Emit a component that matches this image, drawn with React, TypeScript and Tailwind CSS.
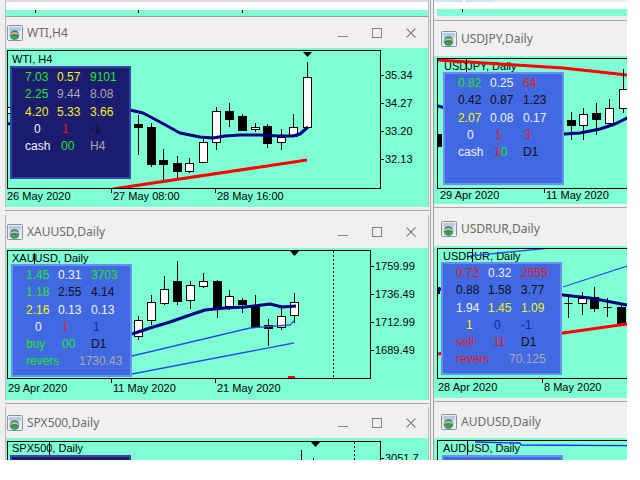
import React from 'react';
import clsx from 'clsx';

type Pt = [number, number];
// x, wick top, wick bottom, body top, body bottom, kind
type Candle = [number, number, number, number, number, 'w' | 'b' | 'x'];
type Cell = { t: React.ReactNode; c: string; cls?: string };

const COLORS: Record<string, string> = {
  g: 'text-[#22e622]',
  y: 'text-[#f4f01a]',
  w: 'text-[#f2f2ff]',
  r: 'text-[#e51b1b]',
  k: 'text-[#101018]',
  s: 'text-[#a9a9b4]',
  b: 'text-[#1226b8]',
};

const pts = (p: Pt[]) => p.map((q) => q.join(',')).join(' ');

const Candles = ({ data }: { data: Candle[] }) => (
  <g>
    {data.map(([x, hi, lo, top, bot, t], i) => (
      <g key={i}>
        <line x1={x + 0.5} y1={hi} x2={x + 0.5} y2={lo} stroke="#000" />
        {t === 'x' ? (
          <line x1={x - 3.5} y1={top + 0.5} x2={x + 4.5} y2={top + 0.5} stroke="#000" />
        ) : (
          <rect
            x={x - 3.5}
            y={top + 0.5}
            width={8}
            height={Math.max(bot - top, 1)}
            fill={t === 'w' ? '#fff' : '#000'}
            stroke="#000"
          />
        )}
      </g>
    ))}
  </g>
);

const Line = ({ p, color, w }: { p: Pt[]; color: string; w: number }) => (
  <polyline points={pts(p)} fill="none" stroke={color} strokeWidth={w} strokeLinejoin="round" />
);

const Wick = ({ x, y1, y2 }: { x: number; y1: number; y2: number }) => (
  <line x1={x + 0.5} y1={y1} x2={x + 0.5} y2={y2} stroke="#000" />
);

const Arrow = ({ x, y }: { x: number; y: number }) => (
  <polygon points={`${x - 4},${y} ${x + 5},${y} ${x + 0.5},${y + 5}`} fill="#000" />
);

const ChartIcon = () => (
  <svg width="16" height="16" viewBox="0 0 16 16" className="shrink-0">
    <rect x="0.5" y="0.5" width="15" height="15" rx="1" fill="#e6edf3" stroke="#8393a5" />
    <rect x="2" y="2" width="12" height="4" fill="#b8cadb" />
    <circle cx="7.5" cy="10" r="4.8" fill="#2b7fc4" />
    <path d="M2.9 9 C5 6.6 10 6.6 12.2 9 L12.3 10.4 C10 8.4 5 8.4 2.8 10.4Z" fill="#f2c51c" />
    <path d="M3.4 12.2 C5.6 10.4 9.4 10.4 11.6 12.2 C9.6 15.4 5.4 15.4 3.4 12.2Z" fill="#3fa535" />
  </svg>
);

const WinButtons = () => (
  <div className="ml-auto flex">
    <div className="w-[34px] flex justify-center">
      <svg width="10" height="10" viewBox="0 0 10 10">
        <line x1="0" y1="8.5" x2="10" y2="8.5" stroke="#858585" />
      </svg>
    </div>
    <div className="w-[34px] flex justify-center">
      <svg width="10" height="10" viewBox="0 0 10 10">
        <rect x="0.5" y="0.5" width="9" height="9" fill="none" stroke="#858585" />
      </svg>
    </div>
    <div className="w-[34px] flex justify-center">
      <svg width="10" height="10" viewBox="0 0 10 10">
        <path d="M0.5 0.5 L9.5 9.5 M9.5 0.5 L0.5 9.5" stroke="#858585" strokeWidth="1.1" />
      </svg>
    </div>
  </div>
);

const TitleBar = ({ title, cls, buttons }: { title: string; cls: string; buttons?: boolean }) => (
  <div className={clsx('flex items-center bg-[#f0f0f0]', cls)}>
    <ChartIcon />
    <span className="ml-[4px] text-[12px] text-[#6b6b6b] whitespace-nowrap font-['Noto_Sans',sans-serif]">
      {title}
    </span>
    {buttons && <WinButtons />}
  </div>
);

const Panel = ({ rows, navy, pos }: { rows: Cell[][]; navy?: boolean; pos: string }) => (
  <div
    className={clsx(
      'absolute w-[121px] h-[113px] border-2 pl-[13px] pt-[1px] text-[12px] leading-[17.3px]',
      navy ? 'bg-[#1b1b6f] border-[#3a44a6]' : 'bg-[#4169e1] border-[#6a8ef4]',
      pos
    )}
  >
    {rows.map((row, i) => (
      <div key={i} className="grid grid-cols-[32px_33px_1fr] whitespace-nowrap">
        {row.map((cell, j) => (
          <span key={j} className={clsx(COLORS[cell.c], cell.cls)}>
            {cell.t}
          </span>
        ))}
      </div>
    ))}
  </div>
);

type ChartProps = {
  area: string;
  plot: string;
  w: number;
  h: number;
  vb: string;
  label: string;
  labelPos: string;
  panel: React.ReactNode;
  children: React.ReactNode;
  prices?: string[];
  pricesPad?: string;
  dates?: { t: string; cls: string }[];
  dateText?: string;
};

const Chart = (props: ChartProps) => (
  <div className={clsx('bg-[#7fffd4] overflow-hidden text-black', props.area)}>
    <div className="flex">
      <div className={clsx('relative shrink-0 border border-black', props.plot)}>
        <span className={clsx('absolute whitespace-nowrap text-[11px] leading-[13px]', props.labelPos)}>
          {props.label}
        </span>
        <svg className="absolute left-0 top-0" width={props.w} height={props.h} viewBox={props.vb}>
          {props.children}
        </svg>
        {props.panel}
      </div>
      {props.prices && (
        <div className={clsx('flex flex-col shrink-0', props.pricesPad)}>
          {props.prices.map((p) => (
            <div key={p} className="h-[28px] flex items-center">
              <span className="w-[3px] h-px bg-black" />
              <span className="ml-[1px] text-[11px] leading-[13px]">{p}</span>
            </div>
          ))}
        </div>
      )}
    </div>
    {props.dates && (
      <div className="flex">
        {props.dates.map((d, i) => (
          <div key={i} className={clsx('flex shrink-0', d.cls)}>
            {i > 0 && <span className="w-px h-[4px] bg-black shrink-0" />}
            <span
              className={clsx('text-[11px] leading-[13px] whitespace-nowrap', i > 0 && 'ml-[1px]', props.dateText)}
            >
              {d.t}
            </span>
          </div>
        ))}
      </div>
    )}
  </div>
);

const Sep = ({ cls }: { cls: string }) => (
  <div className={cls}>
    <div className="h-px bg-[#a9a9a9]" />
  </div>
);

// ---- panel contents ----
const wtiRows: Cell[][] = [
  [{ t: '7.03', c: 'g' }, { t: '0.57', c: 'y' }, { t: '9101', c: 'g' }],
  [{ t: '2.25', c: 'g' }, { t: '9.44', c: 's' }, { t: '8.08', c: 's' }],
  [{ t: '4.20', c: 'y' }, { t: '5.33', c: 'y' }, { t: '3.66', c: 'y' }],
  [{ t: '0', c: 'w', cls: 'ml-[9px]' }, { t: '1', c: 'r', cls: 'ml-[5px]' }, { t: '-1', c: 'k' }],
  [{ t: 'cash', c: 'w' }, { t: '00', c: 'g', cls: 'ml-[4px]' }, { t: 'H4', c: 's' }],
];

const jpyRows: Cell[][] = [
  [{ t: '0.82', c: 'g' }, { t: '0.25', c: 'w' }, { t: '64', c: 'r' }],
  [{ t: '0.42', c: 'k' }, { t: '0.87', c: 'k' }, { t: '1.23', c: 'k' }],
  [{ t: '2.07', c: 'y' }, { t: '0.08', c: 'w' }, { t: '0.17', c: 'w' }],
  [{ t: '0', c: 'w', cls: 'ml-[9px]' }, { t: '1', c: 'r', cls: 'ml-[5px]' }, { t: '3', c: 'r', cls: 'ml-[1px]' }],
  [
    { t: 'cash', c: 'w' },
    {
      t: (
        <>
          <span className="text-[#e51b1b]">1</span>
          <span className="text-[#22e622]">0</span>
        </>
      ),
      c: 'w',
      cls: 'ml-[4px]',
    },
    { t: 'D1', c: 'k' },
  ],
];

const xauRows: Cell[][] = [
  [{ t: '1.45', c: 'g' }, { t: '0.31', c: 'w' }, { t: '3703', c: 'g' }],
  [{ t: '1.18', c: 'g' }, { t: '2.55', c: 'k' }, { t: '4.14', c: 'k' }],
  [{ t: '2.16', c: 'y' }, { t: '0.13', c: 'w' }, { t: '0.13', c: 'w' }],
  [{ t: '0', c: 'w', cls: 'ml-[9px]' }, { t: '1', c: 'r', cls: 'ml-[4px]' }, { t: '1', c: 'b', cls: 'ml-[2px]' }],
  [{ t: 'buy', c: 'g' }, { t: '00', c: 'g', cls: 'ml-[4px]' }, { t: 'D1', c: 'k' }],
  [{ t: 'revers', c: 'g' }, { t: '1730.43', c: 's', cls: 'col-span-2 pl-[21px]' }],
];

const rurRows: Cell[][] = [
  [{ t: '0.72', c: 'r' }, { t: '0.32', c: 'w' }, { t: '2555', c: 'r' }],
  [{ t: '0.88', c: 'k' }, { t: '1.58', c: 'k' }, { t: '3.77', c: 'k' }],
  [{ t: '1.94', c: 'w' }, { t: '1.45', c: 'y' }, { t: '1.09', c: 'y' }],
  [{ t: '1', c: 'y', cls: 'ml-[10px]' }, { t: '0', c: 'b', cls: 'ml-[6px]' }, { t: '-1', c: 'b' }],
  [{ t: 'sell', c: 'r' }, { t: '11', c: 'r', cls: 'ml-[5px]' }, { t: 'D1', c: 'k' }],
  [{ t: 'revers', c: 'r' }, { t: '70.125', c: 's', cls: 'col-span-2 pl-[21px]' }],
];

const emptyRows: Cell[][] = [[{ t: '', c: 'g' }]];

// ---- candle data (page coordinates) ----
const wtiCandles: Candle[] = [
  [6, 105, 115, 107, 113, 'w'],
  [138, 115, 155, 124, 127, 'b'],
  [151, 123, 167, 127, 164, 'b'],
  [163, 149, 183, 160, 164, 'b'],
  [177, 156, 179, 163, 171, 'b'],
  [189, 158, 173, 163, 171, 'w'],
  [203, 137, 163, 142, 162, 'w'],
  [216, 107, 150, 111, 142, 'w'],
  [229, 103, 127, 111, 119, 'b'],
  [242, 114, 131, 116, 130, 'b'],
  [255, 123, 132, 127, 129, 'w'],
  [267, 124, 148, 126, 143, 'b'],
  [281, 129, 150, 137, 142, 'w'],
  [293, 114, 137, 127, 136, 'w'],
  [307, 62, 127, 77, 127, 'w'],
];

const xauCandles: Candle[] = [
  [138, 316, 340, 320, 336, 'w'],
  [151, 295, 325, 302, 320, 'w'],
  [164, 276, 305, 289, 303, 'w'],
  [177, 261, 305, 281, 301, 'b'],
  [190, 281, 309, 285, 300, 'w'],
  [203, 273, 288, 281, 286, 'w'],
  [217, 280, 318, 281, 307, 'b'],
  [229, 290, 310, 296, 306, 'w'],
  [242, 298, 313, 300, 304, 'b'],
  [255, 295, 328, 307, 327, 'b'],
  [268, 319, 346, 325, 328, 'b'],
  [281, 305, 330, 316, 327, 'w'],
  [294, 293, 323, 302, 315, 'w'],
];

const jpyCandles: Candle[] = [
  [437, 128, 150, 134, 146, 'b'],
  [571, 112, 140, 120, 125, 'b'],
  [583, 108, 140, 114, 125, 'w'],
  [596, 103, 135, 113, 119, 'b'],
  [609, 99, 126, 108, 123, 'w'],
  [623, 69, 113, 89, 108, 'w'],
];

const rurCandles: Candle[] = [
  [435, 284, 296, 287, 293, 'b'],
  [568, 297, 318, 303, 303, 'x'],
  [582, 292, 315, 298, 303, 'w'],
  [594, 287, 312, 297, 308, 'b'],
  [607, 298, 317, 307, 307, 'x'],
  [621, 303, 325, 307, 323, 'b'],
];

export default function App() {
  return (
    <div className="w-[640px] h-[480px] bg-white overflow-hidden font-['Liberation_Sans',Arial,sans-serif]">
      <div className="flex w-[627px] h-[460px] bg-[#f0f0f0]">
        {/* left column */}
        <div className="w-[429px] shrink-0 pl-[5px] flex flex-col">
          <div className="h-[17px] flex flex-col border-x border-[#b9b9b9]">
            <div className="h-[2px] bg-[#dcdcdc]" />
            <div className="h-[8px] bg-white" />
            <div className="h-[6px] bg-[#7fffd4] flex items-start">
              <span className="w-[29px] shrink-0" />
              <span className="w-px h-[3px] bg-black" />
              <span className="w-[102px] shrink-0" />
              <span className="w-px h-[3px] bg-black" />
              <span className="w-[103px] shrink-0" />
              <span className="w-px h-[3px] bg-black" />
            </div>
            <div className="h-px bg-[#9c9c9c]" />
          </div>

          <div className="border-x border-[#b9b9b9]">
            <TitleBar title="WTI,H4" cls="h-[31px] pl-[1px]" buttons />
            <Chart
              area="h-[159px] pt-[2px] pl-[1px]"
              plot="w-[374px] h-[139px]"
              w={372}
              h={137}
              vb="8 51 372 137"
              label="WTI, H4"
              labelPos="left-[4px] top-[2px]"
              panel={<Panel rows={wtiRows} navy pos="left-[2px] top-[15px] h-[112px]" />}
              prices={['35.34', '34.27', '33.20', '32.13']}
              pricesPad="pt-[11px]"
              dates={[
                { t: '26 May 2020', cls: 'w-[104px]' },
                { t: '27 May 08:00', cls: 'w-[104px]' },
                { t: '28 May 16:00', cls: 'w-[110px]' },
              ]}
              dateText="pt-[1px]"
            >
              <Candles data={wtiCandles} />
              <Line
                p={[
                  [8, 124], [40, 116], [80, 110], [130, 110], [143, 113], [160, 122], [180, 133],
                  [200, 137], [213, 138], [225, 136], [240, 135], [260, 135], [280, 136], [293, 136],
                  [300, 134], [308, 127],
                ]}
                color="#00007e"
                w={3}
              />
              <Line p={[[113, 189], [307, 160]]} color="#ff0000" w={3} />
              <Arrow x={307} y={52} />
            </Chart>
          </div>

          <Sep cls="h-[8px] pt-[3px]" />

          <div className="border-x border-[#b9b9b9]">
            <TitleBar title="XAUUSD,Daily" cls="h-[33px] pl-[1px]" buttons />
            <Chart
              area="h-[152px] pt-[2px] pl-[1px]"
              plot="w-[364px] h-[129px]"
              w={362}
              h={127}
              vb="8 251 362 127"
              label="XAUUSD, Daily"
              labelPos="left-[4px] top-[1px]"
              panel={<Panel rows={xauRows} pos="left-[3px] top-[13px]" />}
              prices={['1759.99', '1736.49', '1712.99', '1689.49']}
              pricesPad="pt-[2px]"
              dates={[
                { t: '29 Apr 2020', cls: 'w-[104px] pl-[1px]' },
                { t: '11 May 2020', cls: 'w-[104px]' },
                { t: '21 May 2020', cls: 'w-[110px]' },
              ]}
              dateText="pt-[3px]"
            >
              <line x1="333.5" y1="251" x2="333.5" y2="378" stroke="#000" strokeDasharray="2 2" />
              <Wick x={34} y1={253} y2={265} />
              <Candles data={xauCandles} />
              <Line p={[[132, 356], [250, 328], [290, 325], [294, 321]]} color="#2a4fe0" w={1.3} />
              <Line p={[[132, 374], [294, 343]]} color="#2a4fe0" w={1.3} />
              <Line
                p={[
                  [132, 334], [150, 328], [170, 322], [190, 315], [205, 310], [225, 308], [245, 307],
                  [262, 305], [270, 304], [282, 307], [296, 306],
                ]}
                color="#00007e"
                w={3}
              />
              <line x1="288" y1="377" x2="295" y2="377" stroke="#ff0000" strokeWidth="2" />
              <Arrow x={294} y={251} />
            </Chart>
          </div>

          <Sep cls="h-[7px] pt-[3px]" />

          <div className="border-x border-[#b9b9b9]">
            <TitleBar title="SPX500,Daily" cls="h-[31px] pl-[1px]" buttons />
            <Chart
              area="h-[22px] pt-[3px] pl-[1px]"
              plot="w-[374px] h-[40px]"
              w={372}
              h={38}
              vb="8 442 372 38"
              label="SPX500, Daily"
              labelPos="left-[4px] top-0"
              panel={<Panel rows={emptyRows} navy pos="left-[2px] top-[13px]" />}
              prices={['3051.7']}
              pricesPad="pt-[3px]"
            >
              <line x1="354.5" y1="442" x2="354.5" y2="480" stroke="#000" strokeDasharray="2 2" />
              <Wick x={49} y1={442} y2={456} />
              <Wick x={301} y1={450} y2={480} />
              <Wick x={313} y1={458} y2={480} />
              <Arrow x={315} y={442} />
            </Chart>
          </div>
        </div>

        {/* splitter between the tiled columns */}
        <div className="w-[4px] shrink-0 flex">
          <div className="ml-[1px] w-px bg-[#a6a6a6]" />
        </div>

        {/* right column */}
        <div className="flex-1 min-w-0 flex flex-col border-l border-[#a0a0a0] overflow-hidden">
          <div className="h-[21px] flex flex-col">
            <div className="h-[2px] flex">
              <span className="w-[29px] bg-[#cce4f7]" />
              <span className="w-[2px] bg-white" />
              <span className="w-[30px] bg-[#cce4f7]" />
            </div>
            <div className="h-[7px] bg-white" />
            <div className="h-[7px] ml-[3px] bg-[#7fffd4] flex items-start">
              <span className="w-[25px] shrink-0" />
              <span className="w-px h-[3px] bg-black" />
            </div>
            <div className="h-[4px]" />
            <div className="h-px bg-[#a9a9a9]" />
          </div>

          <TitleBar title="USDJPY,Daily" cls="h-[35px] pl-[7px]" />
          <Chart
            area="h-[148px] pt-[2px] pl-[3px]"
            plot="w-[260px] h-[131px]"
            w={258}
            h={129}
            vb="438 59 258 129"
            label="USDJPY, Daily"
            labelPos="left-[6px] top-[1px]"
            panel={<Panel rows={jpyRows} pos="left-[5px] top-[13px]" />}
            dates={[
              { t: '29 Apr 2020', cls: 'w-[107px] pl-[3px]' },
              { t: '11 May 2020', cls: 'w-[110px]' },
            ]}
            dateText="pt-0"
          >
            <Line p={[[438, 60], [500, 64], [563, 68], [600, 72], [627, 75], [700, 78]]} color="#ff0000" w={3} />
            <Wick x={466} y1={59} y2={73} />
            <Candles data={jpyCandles} />
            <Line
              p={[[438, 106], [470, 115], [564, 134], [580, 133], [600, 129], [615, 124], [627, 118], [700, 105]]}
              color="#00007e"
              w={3}
            />
          </Chart>

          <Sep cls="h-[8px] pt-[3px]" />

          <TitleBar title="USDRUR,Daily" cls="h-[34px] pl-[7px]" />
          <Chart
            area="h-[152px] pt-[2px] pl-[3px]"
            plot="w-[260px] h-[131px]"
            w={258}
            h={129}
            vb="438 249 258 129"
            label="USDRUR, Daily"
            labelPos="left-[5px] top-[1px]"
            panel={<Panel rows={rurRows} pos="left-[3px] top-[13px]" />}
            dates={[
              { t: '28 Apr 2020', cls: 'w-[105px] pl-[1px]' },
              { t: '8 May 2020', cls: 'w-[110px]' },
            ]}
            dateText="pt-[2px]"
          >
            <Line p={[[470, 256], [540, 249], [560, 247]]} color="#2a4fe0" w={1.3} />
            <Line p={[[563, 287], [627, 266], [700, 245]]} color="#2a4fe0" w={1.3} />
            <Wick x={472} y1={249} y2={263} />
            <Candles data={rurCandles} />
            <Line p={[[438, 289], [470, 290], [563, 295], [590, 298], [627, 305], [700, 320]]} color="#00007e" w={3} />
            <Line p={[[438, 354], [563, 333], [627, 324], [700, 316]]} color="#ff0000" w={3} />
          </Chart>

          <Sep cls="h-[7px] pt-[3px]" />

          <TitleBar title="AUDUSD,Daily" cls="h-[33px] pl-[7px]" />
          <Chart
            area="h-[22px] pt-[2px] pl-[3px]"
            plot="w-[260px] h-[40px]"
            w={258}
            h={38}
            vb="438 441 258 38"
            label="AUDUSD, Daily"
            labelPos="left-[5px] top-[1px]"
            panel={<Panel rows={emptyRows} pos="left-[4px] top-[14px]" />}
          >
            <Line p={[[475, 442], [520, 443], [521, 445], [700, 446]]} color="#1a2cf0" w={1.3} />
            <Wick x={467} y1={441} y2={455} />
          </Chart>
        </div>
      </div>
    </div>
  );
}
